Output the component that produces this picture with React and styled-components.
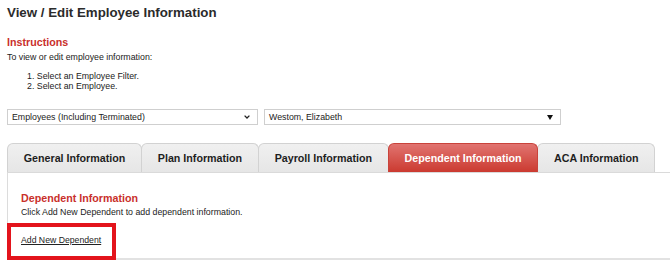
import React from 'react';
import styled, { createGlobalStyle } from 'styled-components';

const GlobalStyle = createGlobalStyle`
  html, body {
    margin: 0;
    padding: 0;
    background: #fff;
    overflow: hidden;
  }
  body {
    font-family: "Liberation Sans", Arial, sans-serif;
    color: #222;
  }
`;

const Page = styled.div`
  padding-left: 7px;
`;

const Title = styled.h1`
  margin: 0;
  padding-top: 5px;
  font-size: 13.3px;
  line-height: 16px;
  font-weight: bold;
  color: #2b2b2b;
`;

const Heading = styled.h2`
  margin: ${(p) => p.$top || 0}px 0 0;
  font-size: 10.7px;
  line-height: 13px;
  font-weight: bold;
  color: #c9302b;
`;

const Text = styled.p`
  margin: ${(p) => p.$top || 0}px 0 0;
  font-size: 8.8px;
  line-height: 10px;
`;

const Steps = styled.ol`
  margin: 9.5px 0 0;
  padding-left: 20px;
  list-style-position: inside;
  font-size: 8.8px;
  line-height: 10px;
`;

const Filters = styled.div`
  display: flex;
  gap: 6px;
  margin-top: 18px;
`;

const Select = styled.div`
  box-sizing: border-box;
  display: flex;
  align-items: center;
  justify-content: space-between;
  width: ${(p) => p.$width}px;
  height: 16px;
  padding: 0 7px 0 4px;
  border: 1px solid #cfcfcf;
  background: #fff;
  font-size: 8.8px;
  color: #222;
`;

const Tabs = styled.div`
  display: flex;
  margin-top: 18px;
  border-bottom: 1px solid #dadada;
`;

const Tab = styled.div`
  box-sizing: border-box;
  height: 29px;
  margin-right: -1px;
  padding: 0 15.75px;
  display: flex;
  align-items: center;
  border: 1px solid ${(p) => (p.$active ? '#c9433b' : '#d2d2d2')};
  border-bottom: none;
  border-radius: 6px 6px 0 0;
  background: ${(p) =>
    p.$active
      ? 'linear-gradient(#e17470, #cb3a30)'
      : 'linear-gradient(#f0f0f0, #e6e6e6)'};
  color: ${(p) => (p.$active ? '#fff' : '#1e1e1e')};
  font-size: 10.7px;
  font-weight: bold;
  white-space: nowrap;
  position: relative;
  z-index: ${(p) => (p.$active ? 1 : 0)};
`;

const Panel = styled.div`
  position: relative;
  padding: 19px 0 11px 13px;
  border-left: 1px solid #dcdcdc;
  border-bottom: 2px solid #e2e2e2;
`;

const Link = styled.a`
  display: inline-block;
  margin-top: 18px;
  font-size: 8.7px;
  line-height: 10px;
  color: #222;
  text-decoration: underline;
`;

const Highlight = styled.div`
  position: absolute;
  box-sizing: border-box;
  left: -1px;
  bottom: -2px;
  width: 109px;
  height: 37px;
  border: 4px solid #e3141c;
`;

const Chevron = () => (
  <svg width="6" height="4" viewBox="0 0 6 4">
    <path d="M0.6 0.6 L3 3 L5.4 0.6" fill="none" stroke="#222" strokeWidth="1.3" />
  </svg>
);

const Triangle = () => (
  <svg width="6" height="5" viewBox="0 0 6 5">
    <path d="M0 0 H6 L3 5 Z" fill="#111" />
  </svg>
);

const tabs = [
  'General Information',
  'Plan Information',
  'Payroll Information',
  'Dependent Information',
  'ACA Information',
];

export default function App() {
  return (
    <Page>
      <GlobalStyle />
      <Title>View / Edit Employee Information</Title>
      <Heading $top={14.5}>Instructions</Heading>
      <Text $top={3}>To view or edit employee information:</Text>
      <Steps>
        <li>Select an Employee Filter.</li>
        <li>Select an Employee.</li>
      </Steps>
      <Filters>
        <Select $width={251}>
          <span>Employees (Including Terminated)</span>
          <Chevron />
        </Select>
        <Select $width={297}>
          <span>Westom, Elizabeth</span>
          <Triangle />
        </Select>
      </Filters>
      <Tabs>
        {tabs.map((t) => (
          <Tab key={t} $active={t === 'Dependent Information'}>
            {t}
          </Tab>
        ))}
      </Tabs>
      <Panel>
        <Heading>Dependent Information</Heading>
        <Text $top={2}>Click Add New Dependent to add dependent information.</Text>
        <Link href="#">Add New Dependent</Link>
        <Highlight />
      </Panel>
    </Page>
  );
}
